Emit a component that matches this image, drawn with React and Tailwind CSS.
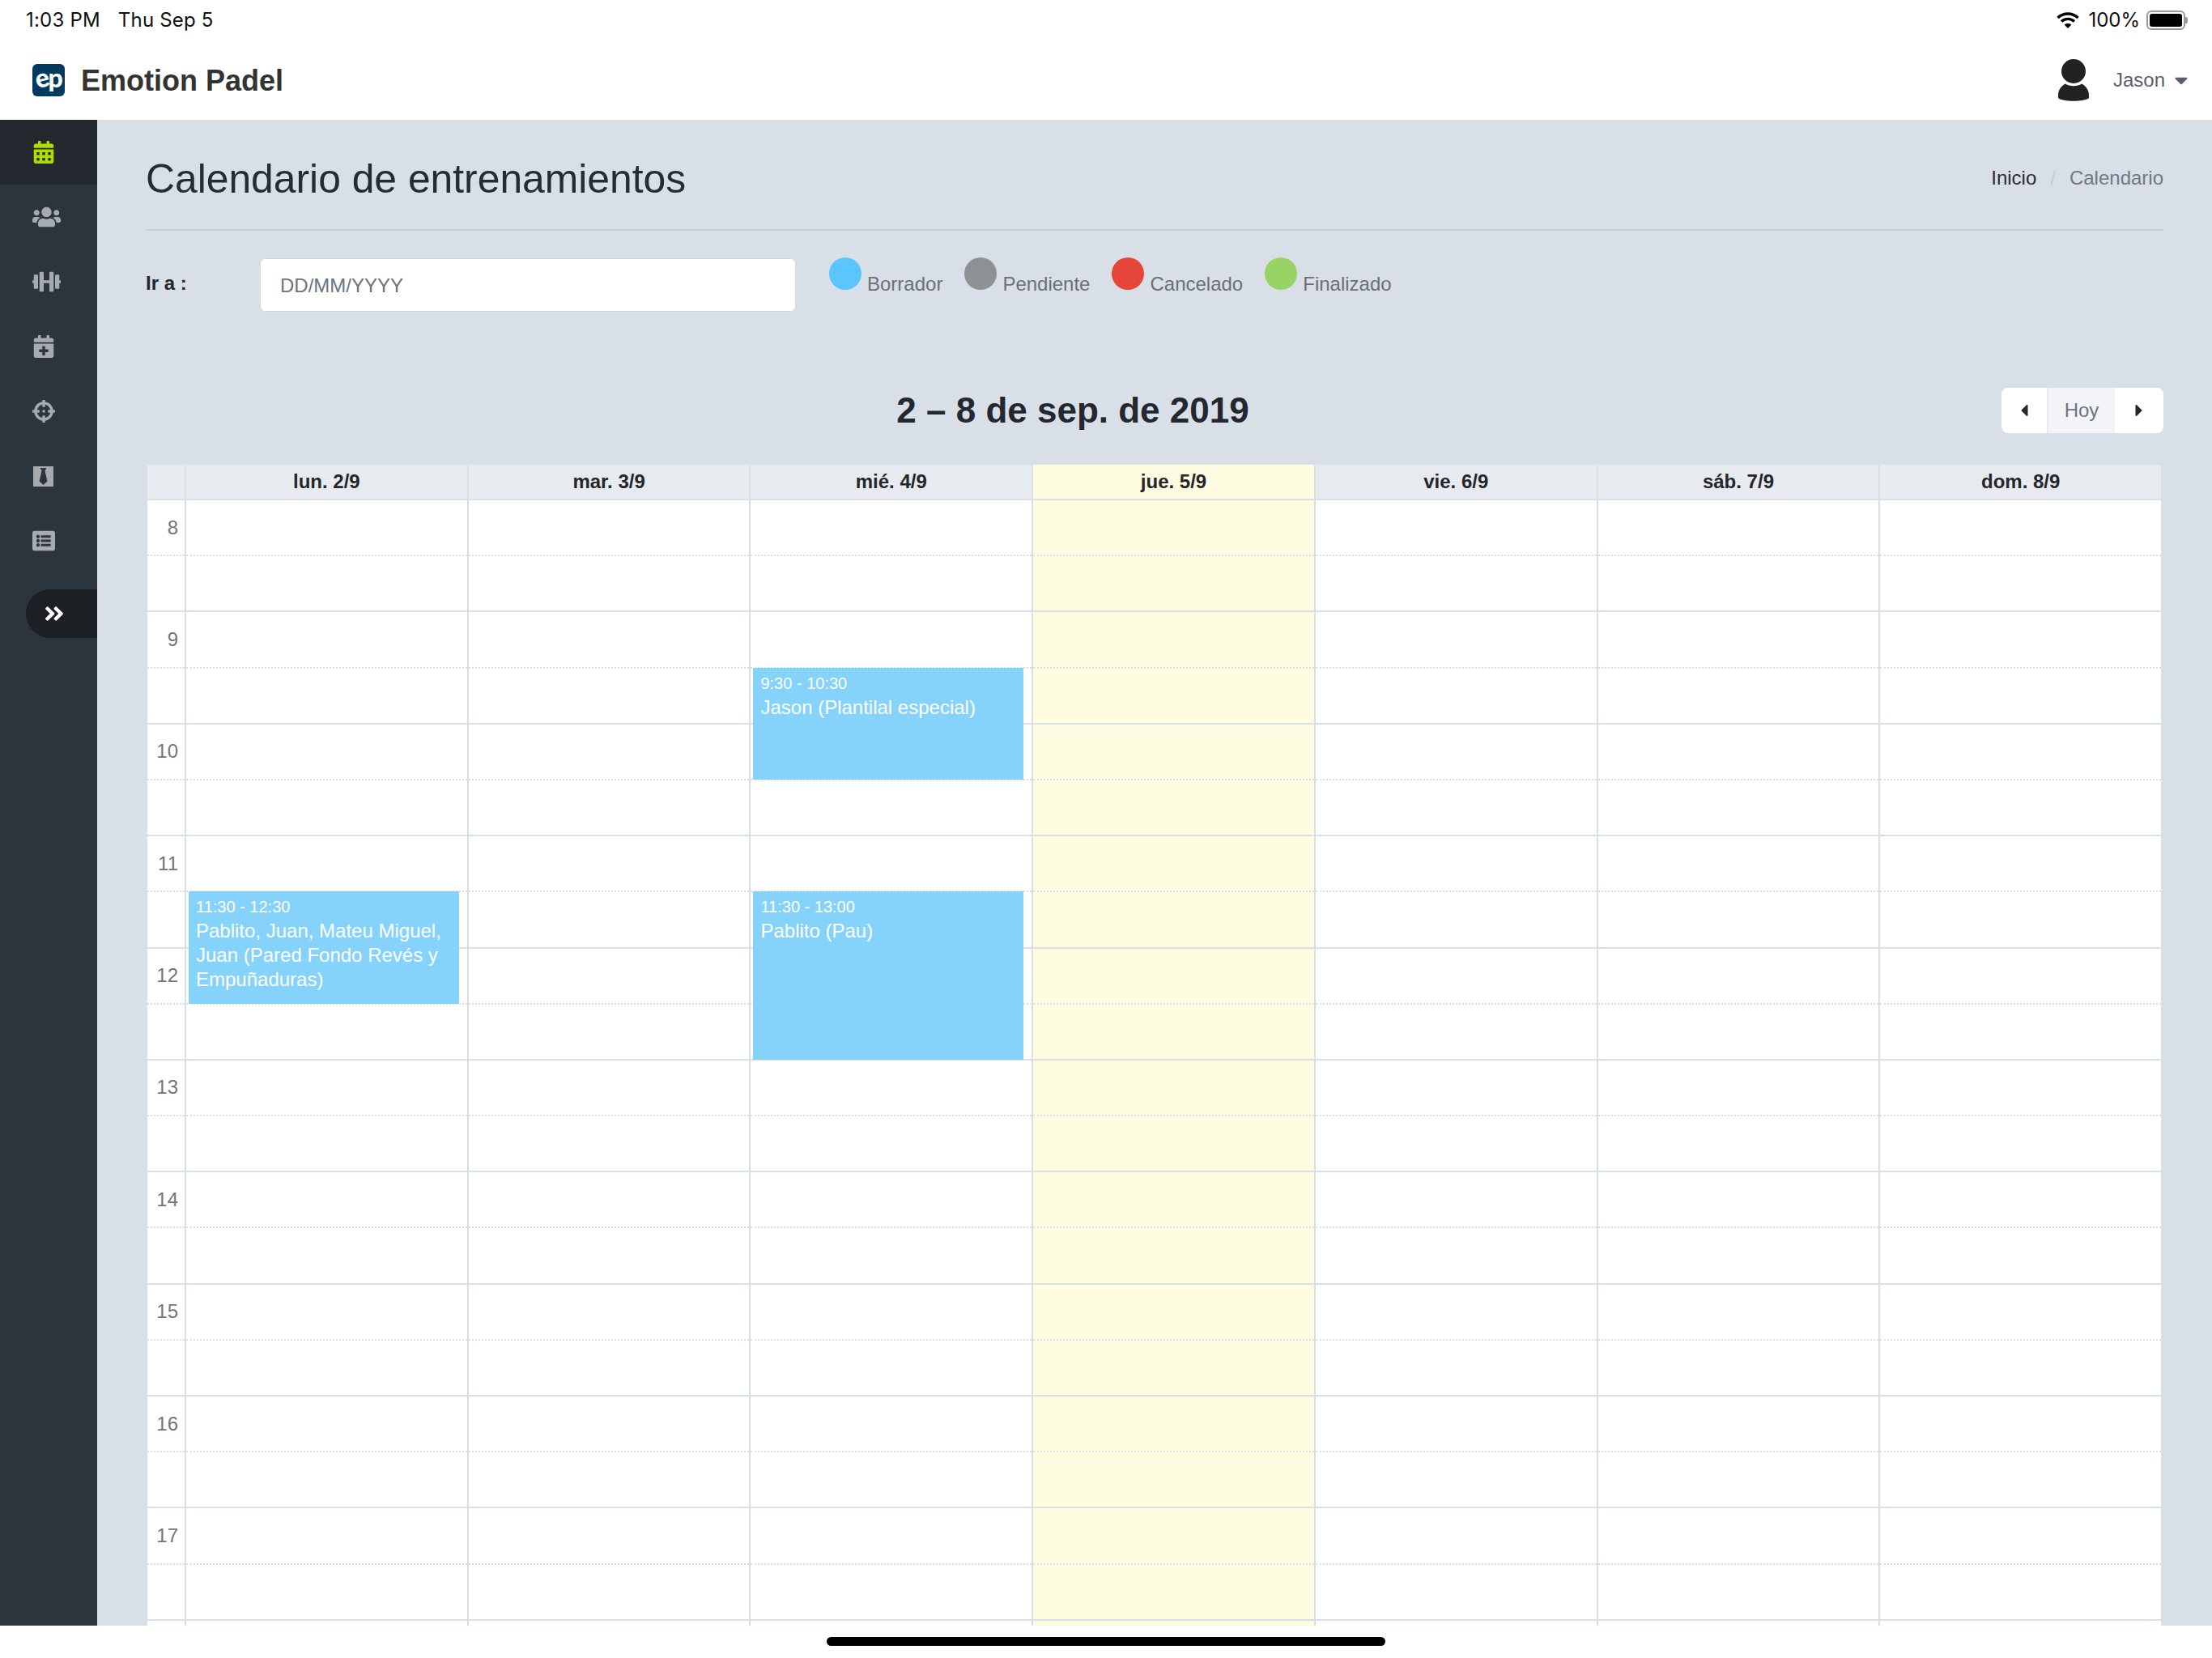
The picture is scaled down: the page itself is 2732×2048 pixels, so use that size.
import React from 'react';
import { FaCalendarAlt, FaUsers, FaDumbbell, FaCalendarPlus, FaCrosshairs, FaListAlt, FaAngleDoubleRight, FaCaretLeft, FaCaretRight, FaCaretDown } from 'react-icons/fa';

const font = { fontFamily: '"Liberation Sans", Arial, sans-serif' };

const TieCard = () => (
    <svg width="25" height="25" viewBox="0 0 25 25" className="ml-[1px]">
        <path fill="currentColor" d="M0 0h25v25H0z" />
        <path fill="#2c353e" d="M8.500 2h8l-2 3.500 3 13-5 4.500-5-4.500 3-13z" />
    </svg>
);

const navItems = [
    { icon: <FaCalendarAlt size={28} />, active: true },
    { icon: <FaUsers className="w-[35px] h-[28px]" /> },
    { icon: <FaDumbbell className="w-[35px] h-[28px]" /> },
    { icon: <FaCalendarPlus size={28} /> },
    { icon: <FaCrosshairs size={28} /> },
    { icon: <TieCard /> },
    { icon: <FaListAlt size={28} /> },
];

const legend = [
    { label: 'Borrador', color: 'bg-[#5bc6fd]' },
    { label: 'Pendiente', color: 'bg-[#8e9193]' },
    { label: 'Cancelado', color: 'bg-[#e64539]' },
    { label: 'Finalizado', color: 'bg-[#97d463]' },
];

const hours = [8, 9, 10, 11, 12, 13, 14, 15, 16, 17];

const days = [
    {
        label: 'lun. 2/9',
        events: [
            {
                time: '11:30 - 12:30',
                title: 'Pablito, Juan, Mateu Miguel, Juan (Pared Fondo Revés y Empuñaduras)',
                pos: 'top-[483px] h-[139px]',
            },
        ],
    },
    { label: 'mar. 3/9', events: [] },
    {
        label: 'mié. 4/9',
        events: [
            { time: '9:30 - 10:30', title: 'Jason (Plantilal especial)', pos: 'top-[207px] h-[138px]' },
            { time: '11:30 - 13:00', title: 'Pablito (Pau)', pos: 'top-[483px] h-[208px]' },
        ],
    },
    { label: 'jue. 5/9', today: true, events: [] },
    { label: 'vie. 6/9', events: [] },
    { label: 'sáb. 7/9', events: [] },
    { label: 'dom. 8/9', events: [] },
];

const StatusBar = () => (
    <div className="h-[50px] flex items-center justify-between pl-[32px] pr-[30px] text-[24px] text-[#111]" style={{ fontFamily: 'Inter, sans-serif' }}>
        <div className="flex gap-[22px] tracking-[0.2px]">
            <span>1:03 PM</span>
            <span>Thu Sep 5</span>
        </div>
        <div className="flex items-center">
            <svg width="28" height="22" viewBox="0 0 28 22" className="mr-[11px]">
                <path fill="none" stroke="#000" strokeWidth="3.4" d="M1.500 8a18 18 0 0 1 25 0M6 12.600a11.600 11.600 0 0 1 16 0" />
                <path fill="#000" d="M9.600 16.600a6.400 6.400 0 0 1 8.800 0L14 21z" />
            </svg>
            <span className="mr-[8px]">100%</span>
            <div className="flex items-center">
                <div className="w-[48px] h-[24px] rounded-[6px] border-2 border-[#9a9a9a] p-[2px]">
                    <div className="w-full h-full rounded-[3px] bg-black"></div>
                </div>
                <div className="w-[3px] h-[8px] rounded-r-[2px] bg-[#9a9a9a]"></div>
            </div>
        </div>
    </div>
);

const Header = () => (
    <div className="h-[98px] flex items-center justify-between pl-[40px] pr-[25px]">
        <div className="flex items-center gap-[20px]">
            <div className="w-[40px] h-[40px] rounded-[6px] bg-[#003a5f] flex items-center justify-center text-white font-black text-[32px] leading-none pb-[6px] tracking-[-1px]" style={{ fontFamily: 'Lato, sans-serif' }}>
                <span className="inline-block -rotate-[14deg]">e</span>
                <span>p</span>
            </div>
            <span className="text-[36px] font-bold text-[#333] pt-[2px]">Emotion Padel</span>
        </div>
        <div className="flex items-center">
            <svg width="38" height="52" viewBox="0 0 38 52" className="mr-[30px]">
                <circle cx="19" cy="15" r="15" fill="#222" />
                <path fill="#222" d="M9 30.500c5 3.500 15 3.500 20 0 5.500 2.500 9 8 9 14.500v3c-5 5-33 5-38 0v-3c0-6.500 3.500-12 9-14.500z" />
            </svg>
            <span className="text-[24px] text-[#5d5d6c] mr-[7px]">Jason</span>
            <FaCaretDown size={26} className="text-[#5d5d6c]" />
        </div>
    </div>
);

const Sidebar = () => (
    <aside className="w-[120px] shrink-0 bg-[#2c353e]">
        {navItems.map((item, i) => (
            <div
                key={i}
                className={`h-[80px] pl-[40px] flex items-center ${item.active ? 'bg-[#23292f] text-[#b0dc00]' : 'text-[#a7abb0]'}`}
            >
                {item.icon}
            </div>
        ))}
        <div className="mt-[20px] ml-[32px] h-[60px] rounded-l-[30px] bg-[#1c1f23] flex items-center pl-[21px] text-white">
            <FaAngleDoubleRight size={28} />
        </div>
    </aside>
);

const Toolbar = () => (
    <div className="relative h-[56px] mt-[94px] flex items-center justify-center">
        <h2 className="text-[44px] font-bold text-[#232730] pr-[202px]">2 – 8 de sep. de 2019</h2>
        <div className="absolute right-0 top-0 flex h-[56px] rounded-[8px] overflow-hidden bg-white">
            <div className="w-[58px] border-r-2 border-[#e7ebf0] flex items-center justify-center text-[#232730]">
                <FaCaretLeft size={24} />
            </div>
            <div className="w-[82px] bg-[#f2f4f8] flex items-center justify-center text-[24px] text-[#6b7480]">Hoy</div>
            <div className="w-[60px] flex items-center justify-center text-[#232730]">
                <FaCaretRight size={24} />
            </div>
        </div>
    </div>
);

const Slots = ({ renderLabel }) => (
    <>
        {hours.map((hour) => (
            <React.Fragment key={hour}>
                <div className="h-[69.2px] border-b-2 border-dotted border-[#d9dfe7] flex items-center justify-end pr-[8px] text-[24px] text-[#6f757b]">
                    {renderLabel ? hour : null}
                </div>
                <div className="h-[69.2px] border-b-2 border-[#d9dfe7]"></div>
            </React.Fragment>
        ))}
        <div className="h-[12px]"></div>
    </>
);

const Calendar = () => (
    <div className="mt-[39px] ml-[2px] mr-[1px] bg-white">
        <div className="flex h-[44px] border-b-2 border-[#d9dfe7] bg-[#e7ebf0] text-[24px] font-bold text-[#24262b]">
            <div className="w-[48px] border-r-2 border-[#d9dfe7]"></div>
            {days.map((day) => (
                <div
                    key={day.label}
                    className={`flex-1 border-r-2 border-[#d9dfe7] flex items-center justify-center ${day.today ? 'bg-[#fefce1]' : ''}`}
                >
                    {day.label}
                </div>
            ))}
        </div>
        <div className="flex">
            <div className="w-[48px] border-r-2 border-[#d9dfe7]">
                <Slots renderLabel />
            </div>
            {days.map((day) => (
                <div key={day.label} className={`relative flex-1 border-r-2 border-[#d9dfe7] ${day.today ? 'bg-[#fefce1]' : ''}`}>
                    <Slots />
                    {day.events.map((ev) => (
                        <div key={ev.time} className={`absolute left-[3px] right-[10px] bg-[#85d2fb] text-white pt-[4px] px-[9px] ${ev.pos}`}>
                            <div className="text-[20px] leading-[30px]">{ev.time}</div>
                            <div className="text-[24px] leading-[30px]">{ev.title}</div>
                        </div>
                    ))}
                </div>
            ))}
        </div>
    </div>
);

const App = () => {
    return (
        <div className="w-[2732px] h-[2048px] flex flex-col bg-white overflow-hidden" style={font}>
            <StatusBar />
            <Header />
            <main className="h-[1860px] flex">
                <Sidebar />
                <div className="flex-1 min-w-0 bg-[#d9dfe7] pl-[60px] pr-[60px] overflow-hidden">
                    <div className="h-[137px] border-b-2 border-[#c8ced6] flex items-center justify-between pt-[12px]">
                        <h1 className="text-[49.8px] text-[#272b35]">Calendario de entrenamientos</h1>
                        <div className="flex text-[24px] mb-[3px]">
                            <span className="text-[#2b2b30]">Inicio</span>
                            <span className="text-[#c5cad1] mx-[17px]">/</span>
                            <span className="text-[#6f7883]">Calendario</span>
                        </div>
                    </div>
                    <div className="mt-[33px] flex items-start">
                        <label className="w-[141px] pt-[14px] text-[24px] font-bold text-[#232730]">Ir a :</label>
                        <input
                            placeholder="DD/MM/YYYY"
                            className="w-[662px] h-[66px] mt-[1px] pl-[24px] pr-[24px] pt-[2px] bg-white rounded-[6px] border border-[#d0d6de] text-[24px] placeholder:text-[#6b7480] outline-none"
                        />
                        <div className="ml-[41px] flex gap-[27px]">
                            {legend.map((item) => (
                                <div key={item.label} className="flex items-start gap-[7px]">
                                    <span className={`w-[40px] h-[40px] rounded-full ${item.color}`}></span>
                                    <span className="pt-[15px] text-[24px] text-[#6b6f78]">{item.label}</span>
                                </div>
                            ))}
                        </div>
                    </div>
                    <Toolbar />
                    <Calendar />
                </div>
            </main>
            <div className="flex-1 flex justify-center pt-[14px]">
                <div className="w-[690px] h-[11px] rounded-full bg-black"></div>
            </div>
        </div>
    );
};

export default App;
